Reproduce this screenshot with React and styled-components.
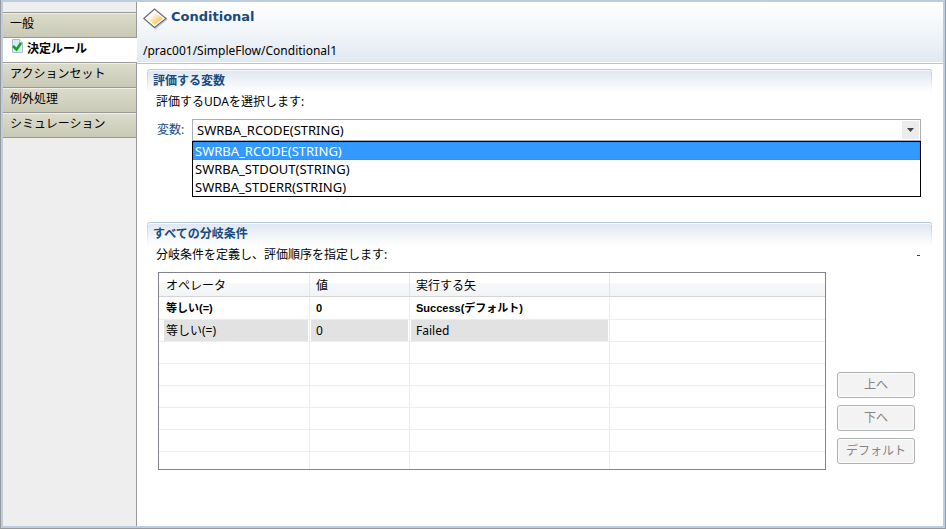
import React, { useState } from 'react';
import styled, { createGlobalStyle } from 'styled-components';

const GlobalStyle = createGlobalStyle`
  * {
    box-sizing: border-box;
  }
  body {
    margin: 0;
    background: #fff;
    color: #000;
    font-family: "Noto Sans", "Noto Sans CJK JP", sans-serif;
    font-size: 12px;
    line-height: 18px;
  }
  button, select {
    font: inherit;
    color: inherit;
  }
`;

const menus = ['一般', '決定ルール', 'アクションセット', '例外処理', 'シミュレーション'];
const variables = ['SWRBA_RCODE(STRING)', 'SWRBA_STDOUT(STRING)', 'SWRBA_STDERR(STRING)'];
const branches = [
  { operator: '等しい(=)', value: '0', arrow: 'Success(デフォルト)', isDefault: true },
  { operator: '等しい(=)', value: '0', arrow: 'Failed', selected: true },
];
const emptyRows = [1, 2, 3, 4, 5, 6];

const CheckIcon = () => (
  <svg width="14" height="16" viewBox="0 0 14 16" aria-hidden="true">
    <path d="M2.500 1.500h7l3 3v10h-10z" fill="#dce8f6" stroke="#a9bcd2" />
    <path d="M9.500 1.500v3h3" fill="#fff" stroke="#a9bcd2" />
    <path d="M3 8l3.500 3.500 4.500-6.500" fill="none" stroke="#12a51c" strokeWidth="2.600" />
  </svg>
);

const DiamondIcon = () => (
  <svg width="26" height="22" viewBox="0 0 26 22" aria-hidden="true">
    <defs>
      <linearGradient id="diamond" x1="0" y1="0" x2="1" y2="1">
        <stop offset="0.3" stopColor="#fffaf0" />
        <stop offset="0.75" stopColor="#fbc866" />
      </linearGradient>
    </defs>
    <path d="M2 12L12.500 21.500 24 12" fill="none" stroke="#c3c8cd" strokeWidth="1.500" />
    <path d="M0.800 11.500L11.500 2l11.500 9.500-11.500 9z" fill="#fff" stroke="#6a6b6d" strokeWidth="1.200" />
    <path d="M4 11.500l7.500-7 8.500 7-8.500 6.500z" fill="url(#diamond)" />
  </svg>
);

const App = () => {
  const [variable, setVariable] = useState(variables[0]);

  return (
    <>
      <GlobalStyle />
      <Editor>
        <Side>
          {menus.map((menu) => (
            <MenuButton key={menu} $active={menu === '決定ルール'}>
              {menu === '決定ルール' && <CheckIcon />}
              {menu}
            </MenuButton>
          ))}
        </Side>
        <Main>
          <Header>
            <TitleLine>
              <DiamondIcon />
              <Title>Conditional</Title>
            </TitleLine>
            <Path>/prac001/SimpleFlow/Conditional1</Path>
          </Header>

          <Section $height="153px">
            <SectionTitle>評価する変数</SectionTitle>
            <Guide>評価するUDAを選択します:</Guide>
            <Field>
              <FieldLabel htmlFor="variable">変数:</FieldLabel>
              <Combo>
                <Select id="variable" value={variable} onChange={(e) => setVariable(e.target.value)}>
                  {variables.map((name) => <option key={name}>{name}</option>)}
                </Select>
                <ComboArrow>
                  <svg width="7" height="4" viewBox="0 0 7 4"><path d="M0 0h7L3.500 4z" fill="#444" /></svg>
                </ComboArrow>
                <Options role="listbox" aria-label="変数">
                  {variables.map((name) => (
                    <Option
                      key={name}
                      role="option"
                      aria-selected={name === variable}
                      $selected={name === variable}
                      onClick={() => setVariable(name)}
                    >
                      {name}
                    </Option>
                  ))}
                </Options>
              </Combo>
            </Field>
          </Section>

          <Section>
            <SectionTitle>すべての分岐条件</SectionTitle>
            <GuideLine>
              <Guide>分岐条件を定義し、評価順序を指定します:</Guide>
              <Mark />
            </GuideLine>
            <Conditions>
              <TableBox>
                <Table>
                  <thead>
                    <tr>
                      <Th $width="151px">オペレータ</Th>
                      <Th $width="100px">値</Th>
                      <Th $width="200px">実行する矢</Th>
                      <Th />
                    </tr>
                  </thead>
                  <tbody>
                    {branches.map((row) => (
                      <Row key={row.arrow} $bold={row.isDefault}>
                        <Td $selected={row.selected}>{row.operator}</Td>
                        <Td $selected={row.selected}>{row.value}</Td>
                        <Td $selected={row.selected}>{row.arrow}</Td>
                        <Td />
                      </Row>
                    ))}
                    {emptyRows.map((n) => (
                      <Row key={n}><Td /><Td /><Td /><Td /></Row>
                    ))}
                  </tbody>
                </Table>
              </TableBox>
              <Buttons>
                <Button disabled>上へ</Button>
                <Button disabled>下へ</Button>
                <Button disabled>デフォルト</Button>
              </Buttons>
            </Conditions>
          </Section>
        </Main>
      </Editor>
    </>
  );
};

const Editor = styled.div`
  display: flex;
  min-height: 100vh;
  border: 1px solid #999;
  border-top: none;
  background: #fff;
  box-shadow: inset 0 0 0 2px #bccddf;
  padding: 2px;
`;

const Side = styled.nav`
  flex: 0 0 134px;
  padding-top: 10px;
  background: #eee;
  border-right: 1px solid #999;
`;

const MenuButton = styled.button`
  display: flex;
  align-items: center;
  gap: 3px;
  /* the open page runs over the border of the menu */
  width: ${(props) => (props.$active ? '134px' : '133px')};
  margin-right: ${(props) => (props.$active ? '-1px' : '0')};
  height: 25px;
  padding: 0 0 2px 7px;
  border: none;
  border-top: 1px solid #999;
  background: ${(props) => (props.$active ? '#fff' : 'linear-gradient(#dcdccc, #c9c9b6)')};
  box-shadow: ${(props) => (props.$active ? 'none' : 'inset 0 1px #f0f0ea')};
  font-weight: ${(props) => (props.$active ? 'bold' : 'normal')};
  text-align: left;
  white-space: nowrap;

  svg {
    align-self: flex-start;
  }
  &:last-child {
    height: 26px;
    border-bottom: 1px solid #999;
  }
`;

const Main = styled.main`
  flex: 1;
  min-width: 0;
`;

const Header = styled.header`
  height: 62px;
  padding: 5px 6px 0;
  border-bottom: 1px solid #b4c6d8;
  box-shadow: inset 0 -1px #fff;
  background: linear-gradient(#fff, #f1f5f8 50%, #e0e8f2);
`;

const TitleLine = styled.div`
  display: flex;
  align-items: center;
  gap: 2px;
  height: 22px;
`;

const Title = styled.h1`
  margin: 0;
  padding-bottom: 2px;
  color: #174b80;
  font-family: "DejaVu Sans", sans-serif;
  font-size: 13px;
  font-weight: bold;
`;

const Path = styled.div`
  margin-top: 13px;
`;

const Section = styled.section`
  height: ${(props) => props.$height || 'auto'};
  margin: 0 11px 0 10px;

  &:first-of-type {
    margin-top: 5px;
  }
`;

const SectionTitle = styled.h2`
  height: 24px;
  margin: 0;
  padding: 2px 6px 0;
  border-top: 1px solid #b4c9dc;
  border-radius: 3px 3px 0 0;
  background:
    linear-gradient(#b4c9dc, #fff) left / 1px 100% no-repeat,
    linear-gradient(#b4c9dc, #fff) right / 1px 100% no-repeat,
    linear-gradient(#dfe6f1, #fff);
  box-shadow: inset 0 1px #f7f9fc;
  color: #174b80;
  font-size: 12px;
  font-weight: bold;
`;

const Guide = styled.p`
  margin: 0;
  padding-left: 9px;
`;

const GuideLine = styled.div`
  display: flex;
  align-items: center;
  justify-content: space-between;
  padding-right: 12px;
`;

const Mark = styled.span`
  width: 3px;
  height: 1px;
  background: #823;
`;

const Field = styled.div`
  display: flex;
  align-items: center;
  margin-top: 8px;
  padding: 0 11px 0 10px;
`;

const FieldLabel = styled.label`
  flex: 0 0 35px;
  color: #174b80;
`;

const Combo = styled.div`
  position: relative;
  flex: 1;
  height: 22px;
  font-size: 13px;
`;

const Select = styled.select`
  display: block;
  width: 100%;
  height: 22px;
  padding: 0 24px 0 4px;
  border: 1px solid #abadb3;
  border-radius: 0;
  background: #fff;
  appearance: none;
  outline: none;
`;

const ComboArrow = styled.span`
  position: absolute;
  top: 2px;
  right: 2px;
  bottom: 2px;
  display: flex;
  align-items: center;
  justify-content: center;
  width: 17px;
  background: #ececec;
  pointer-events: none;
`;

const Options = styled.ul`
  position: absolute;
  top: 100%;
  left: 0;
  right: 0;
  margin: 0;
  padding: 0;
  border: 1px solid #000;
  background: #fff;
  list-style: none;
`;

const Option = styled.li`
  padding-left: 2px;
  line-height: 18px;
  background: ${(props) => (props.$selected ? '#3399ff' : '#fff')};
  color: ${(props) => (props.$selected ? '#fff' : '#000')};
  outline: ${(props) => (props.$selected ? '1px dotted #cc6600' : 'none')};
  outline-offset: -1px;
`;

const Conditions = styled.div`
  display: flex;
  gap: 11px;
  margin-top: 8px;
  padding: 0 17px 0 11px;
`;

const TableBox = styled.div`
  flex: 1;
  height: 198px;
  overflow: hidden;
  border: 1px solid #82838c;
`;

const Table = styled.table`
  width: 100%;
  table-layout: fixed;
  border-collapse: separate;
  border-spacing: 0;
`;

const Th = styled.th`
  width: ${(props) => props.$width || 'auto'};
  height: 24px;
  padding: 2px 6px 0;
  border-right: 1px solid #e1e6e9;
  border-bottom: 1px solid #d5d5d5;
  background: linear-gradient(#fff 45%, #f6f8f9 45%, #f1f3f4);
  font-weight: normal;
  text-align: left;

  &:first-child {
    padding-left: 7px;
  }
  &:last-child {
    border-right: none;
  }
`;

const Row = styled.tr`
  height: ${(props) => (props.$bold ? '23px' : '22px')};
  font-family: ${(props) => (props.$bold ? '"Liberation Sans", "Noto Sans CJK JP", sans-serif' : 'inherit')};
  font-size: ${(props) => (props.$bold ? '11px' : '12px')};
  font-weight: ${(props) => (props.$bold ? 'bold' : 'normal')};
`;

const Td = styled.td`
  padding: 0 6px;
  border-right: 1px solid #e8eeee;
  border-bottom: 1px solid #ededed;
  background: ${(props) => (props.$selected ? '#e2e2e2' : '#fff')};
  box-shadow: ${(props) => (props.$selected ? 'inset 1px 0 #fff, inset -1px 0 #fff' : 'none')};

  &:first-child {
    padding-left: 7px;
    box-shadow: ${(props) => (props.$selected ? 'inset 5px 0 #fff, inset -1px 0 #fff' : 'none')};
  }
  &:last-child {
    border-right: none;
  }
`;

const Buttons = styled.div`
  display: flex;
  flex-direction: column;
  justify-content: flex-end;
  gap: 7px;
  width: 78px;
  padding-bottom: 6px;
`;

const Button = styled.button`
  height: 26px;
  padding: 0;
  border: 1px solid #adb2b5;
  border-radius: 3px;
  background: #f3f3f3;
  box-shadow: inset 0 0 0 1px #fcfcfc;
  color: #838383;
`;

export default App;
